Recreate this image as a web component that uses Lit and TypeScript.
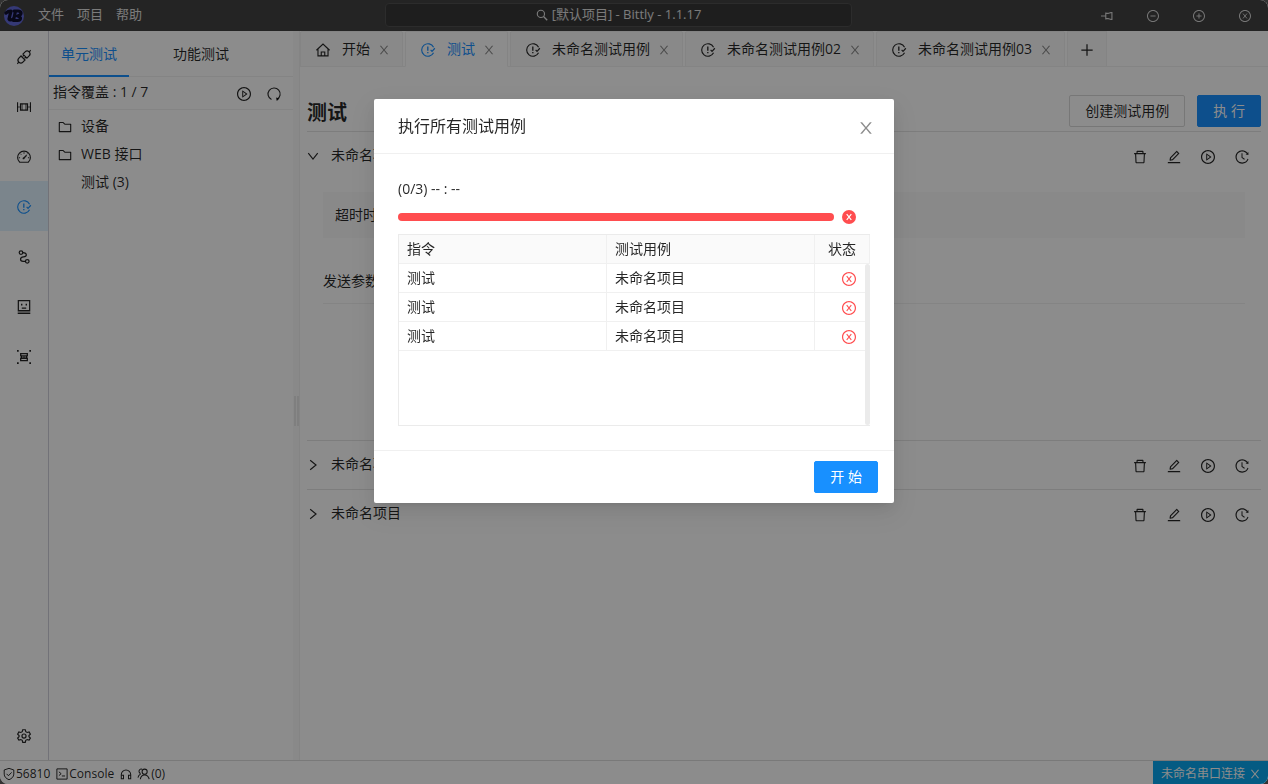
import { LitElement, html, svg, css, nothing } from "lit";
import { customElement, property } from "lit/decorators.js";

const fill = (d: string) => svg`<path fill="currentColor" d=${d}></path>`;
const line = (d: string, w = 72) =>
  svg`<path fill="none" stroke="currentColor" stroke-width=${w} d=${d}></path>`;

const CLOSE =
  "M563.8 512l262.5-312.9c4.4-5.2.7-13.1-6.1-13.1h-79.8c-4.7 0-9.2 2.1-12.3 5.7L511.6 449.8 295.1 191.7c-3-3.6-7.5-5.7-12.3-5.7H203c-6.8 0-10.5 7.9-6.1 13.1L459.4 512 196.9 824.9A7.95 7.95 0 00203 838h79.8c4.7 0 9.2-2.1 12.3-5.7l216.5-258.1 216.5 258.1c3 3.6 7.5 5.7 12.3 5.7h79.8c6.8 0 10.5-7.9 6.1-13.1L563.8 512z";
const RING =
  "M512 64C264.6 64 64 264.6 64 512s200.6 448 448 448 448-200.6 448-448S759.4 64 512 64zm0 820c-205.4 0-372-166.6-372-372s166.6-372 372-372 372 166.6 372 372-166.6 372-372 372z";
const SMALL_X = "M364 330L512 512L364 694M660 330L512 512L660 694";

const ICONS: Record<string, unknown> = {
  close: fill(CLOSE),
  play: [
    fill(RING),
    fill("M719.4 499.1l-296.1-215A15.9 15.9 0 00398 297v430c0 13.1 14.8 20.5 25.3 12.9l296.1-215a15.9 15.9 0 000-25.8zm-257.6 134V390.9L628.5 512 461.8 633.1z"),
  ],
  trash: fill("M360 184h-8c4.4 0 8-3.6 8-8v8h304v-8c0 4.4 3.6 8 8 8h-8v72h72v-80c0-35.3-28.7-64-64-64H352c-35.3 0-64 28.7-64 64v80h72v-72zm504 72H160c-17.7 0-32 14.3-32 32v32c0 4.4 3.6 8 8 8h60.4l24.7 523c1.6 34.1 29.8 61 63.9 61h454c34.2 0 62.3-26.8 63.9-61l24.7-523H888c4.4 0 8-3.6 8-8v-32c0-17.7-14.3-32-32-32zM731.3 840H292.7l-24.2-512h487l-24.2 512z"),
  edit: fill("M257.7 752c2 0 4-.2 6-.5L431.9 722c2-.4 3.9-1.3 5.3-2.8l423.9-423.9a9.96 9.96 0 000-14.1L694.9 114.9c-1.9-1.9-4.4-2.9-7.1-2.9s-5.2 1-7.1 2.9L256.8 538.8c-1.5 1.5-2.4 3.3-2.8 5.3l-29.5 168.2a33.5 33.5 0 009.4 29.8c6.6 6.4 14.9 9.9 23.8 9.9zm67.4-174.4L687.8 215l73.3 73.3-362.7 362.6-88.9 15.7 15.6-89zM880 836H144c-17.7 0-32 14.3-32 32v36c0 4.4 3.6 8 8 8h784c4.4 0 8-3.6 8-8v-36c0-17.7-14.3-32-32-32z"),
  folder: fill("M880 298.4H521L403.7 186.2a8.15 8.15 0 00-5.5-2.2H144c-17.7 0-32 14.3-32 32v592c0 17.7 14.3 32 32 32h736c17.7 0 32-14.3 32-32V330.4c0-17.7-14.3-32-32-32zM840 768H184V256h188.5l119.6 114.4H840V768z"),
  history: fill("M536.1 273H488c-4.4 0-8 3.6-8 8v275.3c0 2.6 1.2 5 3.3 6.5l165.3 120.7c3.6 2.6 8.6 1.9 11.2-1.7l28.6-39c2.7-3.7 1.9-8.7-1.7-11.2L544.1 528.5V281c0-4.4-3.6-8-8-8zm219.8 75.2l156.8 38.3c5 1.2 9.9-2.6 9.9-7.7l.8-161.5c0-6.7-7.7-10.5-12.9-6.3L752.9 334.1a8 8 0 003 14.1zm167.7 301.1l-56.7-19.5a8 8 0 00-10.1 4.8c-1.9 5.1-3.9 10.1-6 15.1-17.8 42.1-43.3 80-75.9 112.5a353 353 0 01-112.5 75.9 352.18 352.18 0 01-137.7 27.8c-47.8 0-94.1-9.3-137.7-27.8a353 353 0 01-112.5-75.9c-32.5-32.5-58-70.4-75.9-112.5A353.44 353.44 0 01171 512c0-47.8 9.3-94.2 27.8-137.8 17.8-42.1 43.3-80 75.9-112.5a353 353 0 01112.5-75.9C430.6 167.3 477 158 524.8 158s94.1 9.3 137.7 27.8A353 353 0 01775 261.7c10.2 10.3 19.8 21 28.6 32.3l59.8-46.8C784.7 146.6 662.2 81.9 524.6 82 285 82.1 92.6 276.7 95 516.4 97.4 751.9 288.9 942 524.8 942c185.5 0 343.5-117.6 403.7-282.3 1.5-4.2-.7-8.9-4.9-10.4z"),
  issue: [
    line("M868 330A402 402 0 1 0 868 694"),
    line("M680 500L770 600L950 400"),
    line("M500 290V560", 84),
    fill("M458 640h84v84h-84z"),
  ],
  home: [line("M90 530L512 130L934 530M190 450V890H834V450"), line("M400 880V640H624V880")],
  reload: [line("M350 868A390 390 0 1 1 700 860"), fill("M640 740L860 800L690 960z")],
  plus: line("M512 150V874M150 512H874", 80),
  down: line("M160 300L512 740L864 300", 84),
  right: line("M300 160L740 512L300 864", 84),
  search: [
    svg`<circle cx="430" cy="430" r="270" fill="none" stroke="currentColor" stroke-width="84"></circle>`,
    line("M630 630L900 900", 100),
  ],
  pin: line("M60 512H400M420 250V774M420 320H600C680 320 720 260 800 260H880V764H800C720 764 680 704 600 704H420", 84),
  minus: [fill(RING), line("M320 512H704")],
  max: [fill(RING), line("M320 512H704M512 320V704")],
  failed: [fill(RING), line(SMALL_X, 68)],
  failedSolid: [
    svg`<circle cx="512" cy="512" r="448" fill="currentColor"></circle>`,
    svg`<path fill="none" stroke="#fff" stroke-width="76" d=${SMALL_X}></path>`,
  ],
  plug: svg`<g transform="rotate(45 512 512)" fill="none" stroke="currentColor" stroke-width="76">
    <path d="M330 430V230A182 182 0 0 1 694 230V430zM512 50V-100"></path>
    <path d="M330 600V794A182 182 0 0 0 694 794V600zM512 974V1124M430 430V540M594 430V540"></path>
  </g>`,
  port: [
    line("M100 200V824M924 200V824"),
    line("M290 310H734V714H290z", 80),
    line("M100 512H290M734 512H924M390 310V714M634 310V714", 48),
  ],
  gauge: [
    line("M240 850A410 410 0 1 1 784 850z"),
    line("M490 590L680 400", 84),
    line("M512 210V300M275 300L335 360M745 290L700 340M180 560H260M764 560H844", 64),
    svg`<circle cx="480" cy="600" r="60" fill="currentColor"></circle>`,
  ],
  flow: [
    svg`<circle cx="320" cy="230" r="115" fill="none" stroke="currentColor" stroke-width="80"></circle>`,
    svg`<circle cx="720" cy="790" r="115" fill="none" stroke="currentColor" stroke-width="80"></circle>`,
    line("M430 230C560 230 660 290 660 390S600 500 480 510C330 530 290 590 290 660S360 790 450 790H600", 80),
  ],
  robot: [
    line("M150 110H874V740H150z", 80),
    fill("M320 310h90v100h-90zM614 310h90v100h-90zM370 540h284v76H370zM110 880h804v76H110z"),
    svg`<path fill="currentColor" opacity=".4" d="M110 780h804v100H110z"></path>`,
  ],
  group: [
    fill("M64 64h110v110H64zM850 64h110v110H850zM64 850h110v110H64zM850 850h110v110H850z"),
    line("M300 290H724V440H300zM300 590H724V740H300z", 84),
    line("M350 440V590M674 440V590M420 514H604", 64),
  ],
  gear: [
    line("M430 110H594L625 235L715 285L840 250L920 390L830 480V560L920 640L840 775L715 740L625 790L594 914H430L400 790L310 740L184 775L104 640L195 560V480L104 390L184 250L310 285L400 235z", 76),
    svg`<circle cx="512" cy="512" r="130" fill="none" stroke="currentColor" stroke-width="76"></circle>`,
  ],
  shield: [line("M512 90L870 210V520C870 720 720 850 512 940C304 850 154 720 154 520V210z"), line("M330 500L470 640L710 390")],
  terminal: [line("M130 130H894V894H130z"), line("M280 350L450 490L280 630M500 660H740")],
  headset: line("M160 560A352 352 0 0 1 864 560V860H700V600H864M160 560V860H324V600H160", 76),
  users: [
    svg`<circle cx="560" cy="340" r="190" fill="none" stroke="currentColor" stroke-width="80"></circle>`,
    line("M240 900C260 700 400 580 560 580S860 700 900 900", 80),
    line("M370 150A170 170 0 0 0 250 470M60 780C80 640 150 560 270 500", 76),
  ],
};

@customElement("ui-icon")
class UiIcon extends LitElement {
  static styles = css`
    :host { display: inline-flex; flex: none; width: 14px; height: 14px; margin-top: 2px; }
    svg { display: block; width: 100%; height: 100%; overflow: visible; }
  `;
  @property() name = "";
  render() {
    return html`<svg viewBox="64 64 896 896" aria-hidden="true">${ICONS[this.name]}</svg>`;
  }
}

const RAIL = [
  ["plug", "连接"],
  ["port", "接口"],
  ["gauge", "面板"],
  ["issue", "测试"],
  ["flow", "流程"],
  ["robot", "模拟"],
  ["group", "分组"],
];
const TABS = [
  { icon: "home", label: "开始" },
  { icon: "issue", label: "测试", active: true },
  { icon: "issue", label: "未命名测试用例" },
  { icon: "issue", label: "未命名测试用例02" },
  { icon: "issue", label: "未命名测试用例03" },
];
const RESULTS = ["未命名项目", "未命名项目", "未命名项目"];

@customElement("app-root")
class AppRoot extends LitElement {
  static styles = css`
    :host {
      display: block;
      height: 100vh;
      background: #333;
      color: rgba(0, 0, 0, 0.85);
      font: 14px/22px "Open Sans", "Noto Sans CJK SC", sans-serif;
    }
    * { box-sizing: border-box; }
    button, a { font: inherit; color: inherit; text-decoration: none; }
    button { display: inline-flex; align-items: center; justify-content: center; margin: 0; padding: 0; border: 0; background: none; white-space: nowrap; }
    .window { display: flex; flex-direction: column; height: 100%; overflow: hidden; border-radius: 8px; background: #fff; }

    .titlebar { display: grid; grid-template-columns: calc(50% - 249px) minmax(0, 467px) 1fr; align-items: center; flex: none; height: 31px; padding-bottom: 1px; background: #424242; color: #fff; font-size: 13px; line-height: 20px; }
    .menus { display: flex; align-items: center; gap: 14px; padding: 0 4px; }
    .logo { width: 20px; height: 20px; margin-top: 2px; }
    .menus nav { display: flex; gap: 13px; padding-bottom: 2px; }
    .menus nav button, .search { color: #e0e0e0; }
    .search { height: 24px; gap: 4px; padding-bottom: 2px; border: 1px solid #505050; border-radius: 4px; background: #373737; }
    .search ui-icon { width: 12px; height: 12px; }
    .winbtns { display: flex; justify-content: flex-end; }
    .winbtns button { width: 46px; height: 30px; color: #d8d8d8; }
    .winbtns ui-icon { width: 12px; height: 12px; }

    .body { display: flex; flex: 1; min-height: 0; }
    .rail { display: flex; flex-direction: column; flex: none; width: 49px; border-right: 1px solid #d0d0da; }
    .rail button { height: 50px; }
    .rail .on { background: #e0f3ff; color: #1890ff; }
    .rail .last { margin-top: auto; }

    .side { flex: none; width: 244px; }
    .sidetabs { display: flex; gap: 32px; height: 46px; border-bottom: 1px solid #f0f0f0; }
    .sidetabs button { height: 46px; padding: 2px 12px 0; border-bottom: 2px solid transparent; }
    .sidetabs .on { border-color: #1890ff; color: #1890ff; }
    .cover { display: flex; align-items: center; gap: 16px; height: 33px; padding: 0 12px 0 4px; border-bottom: 1px solid #f0f0f0; }
    .cover span { flex: 1; padding-bottom: 2px; }
    .tree { margin: 0; padding: 2px 9px; list-style: none; }
    .tree li { display: flex; align-items: center; gap: 9px; height: 28px; }
    .leaf { padding-left: 23px; }
    .splitter { display: flex; align-items: center; justify-content: center; gap: 1px; flex: none; width: 7px; padding-top: 30px; border-right: 1px solid #f0f0f0; background: #fafafa; }
    .splitter i { width: 2px; height: 30px; background: #e8e8e8; }

    .main { display: flex; flex-direction: column; flex: 1; min-width: 0; }
    .tabs { display: flex; gap: 2px; flex: none; height: 36px; box-shadow: inset 0 -1px #f0f0f0; }
    .tab { display: flex; align-items: center; height: 36px; padding: 0 12px 0 15px; border: 1px solid #f0f0f0; border-radius: 2px 2px 0 0; background: #fafafa; white-space: nowrap; }
    .tab .name { gap: 12px; margin-right: 8px; }
    .tab .x { color: rgba(0, 0, 0, 0.45); }
    .tab .x ui-icon { width: 12px; height: 12px; }
    .tab.on { border-bottom-color: #fff; background: #fff; color: #1890ff; }
    .add { width: 40px; border: 1px solid #f0f0f0; background: #fafafa; }
    .content { padding: 20px 7px; }
    .head { display: flex; align-items: center; gap: 12px; height: 45px; padding: 8px 0 4px; border-bottom: 1px solid #e4e4e4; }
    h1 { flex: 1; margin: 0; padding-top: 4px; font-size: 20px; line-height: 28px; font-weight: 700; }
    .btn { height: 32px; padding: 0 15px; border: 1px solid #d9d9d9; border-radius: 2px; background: #fff; }
    .primary { border-color: #1890ff; background: #1890ff; color: #fff; }
    .case { border-bottom: 1px solid #e4e4e4; }
    .case:last-child { border: 0; }
    .case header { display: flex; align-items: center; height: 48px; padding-right: 12px; }
    .case .fold { flex: 1; gap: 12px; justify-content: flex-start; padding-bottom: 2px; }
    .fold ui-icon { width: 12px; height: 12px; }
    .acts { display: flex; gap: 20px; }
    .detail { height: 260px; padding: 12px 16px; }
    .info { display: flex; align-items: center; height: 46px; padding: 0 12px; background: #fafafa; }
    .param { margin-top: 32px; padding-bottom: 11px; border-bottom: 1px solid #f0f0f0; }

    .status { display: flex; align-items: center; flex: none; height: 24px; padding: 2px 0 0 3px; border-top: 1px solid #ddd; font-size: 12px; line-height: 18px; }
    .status button { gap: 1px; margin-right: 6px; }
    .status ui-icon { width: 12px; height: 12px; margin-top: 0; }
    .status .conn { gap: 4px; align-self: stretch; margin: -2px 0 0 auto; padding: 2px 7px 0 8px; background: #09a6ee; color: #fff; }

    .mask { position: fixed; inset: 0; display: flex; align-items: flex-start; justify-content: center; padding-top: 99px; border-radius: 8px; background: rgba(0, 0, 0, 0.45); }
    .modal { width: 520px; border-radius: 2px; background: #fff; box-shadow: 0 3px 6px -4px rgba(0, 0, 0, 0.12), 0 6px 16px rgba(0, 0, 0, 0.08), 0 9px 28px 8px rgba(0, 0, 0, 0.05); }
    .mhead { display: flex; align-items: center; justify-content: space-between; height: 55px; padding: 0 20px 0 24px; border-bottom: 1px solid #f0f0f0; }
    h2 { margin: 0; font-size: 16px; line-height: 22px; font-weight: 400; }
    .mhead button { padding-top: 2px; color: rgba(0, 0, 0, 0.45); }
    .mhead ui-icon { width: 16px; height: 16px; }
    .mbody { padding: 24px; }
    .mbody p { margin: 0; }
    .progress { display: flex; align-items: center; gap: 8px; height: 34px; padding-right: 14px; color: #ff4d4f; }
    .progress ui-icon { margin-top: 0; }
    .bar { flex: 1; height: 8px; border-radius: 4px; background: #f5f5f5; }
    .bar div { height: 100%; border-radius: 4px; background: #ff4d4f; }
    .list { position: relative; height: 192px; border: 1px solid #ebebeb; border-right: 0; }
    .list::after { content: ""; position: absolute; top: 29px; right: 0; bottom: 0; width: 5px; border-radius: 3px; background: #ebebeb; }
    table { width: 100%; border-collapse: separate; border-spacing: 0; table-layout: fixed; }
    th, td { height: 29px; padding: 0 8px; border: 0 solid #f0f0f0; border-width: 0 1px 1px 0; text-align: left; font-weight: 400; }
    th { background: #fafafa; }
    .state { width: 55px; padding-right: 13px; text-align: right; }
    td.state { padding-right: 14px; color: #ff4d4f; border-right: 0; }
    td ui-icon { margin-top: 0; vertical-align: middle; }
    .mfoot { display: flex; justify-content: flex-end; padding: 10px 16px; border-top: 1px solid #f0f0f0; }
  `;

  private renderCase(open: boolean) {
    return html`<section class="case">
      <header>
        <button class="fold" aria-expanded=${open}><ui-icon name=${open ? "down" : "right"}></ui-icon>未命名项目</button>
        <div class="acts">
          <button aria-label="删除"><ui-icon name="trash"></ui-icon></button>
          <button aria-label="编辑"><ui-icon name="edit"></ui-icon></button>
          <button aria-label="执行"><ui-icon name="play"></ui-icon></button>
          <button aria-label="历史"><ui-icon name="history"></ui-icon></button>
        </div>
      </header>
      ${open
        ? html`<div class="detail"><div class="info">超时时间</div><div class="param">发送参数</div></div>`
        : nothing}
    </section>`;
  }

  render() {
    return html`
      <div class="window">
        <header class="titlebar">
          <div class="menus">
            <svg class="logo" viewBox="0 0 20 20" aria-hidden="true">
              <circle cx="10" cy="10" r="10" fill="#6268d8"></circle>
              <g fill="none" stroke="#10102c" stroke-linejoin="round" stroke-linecap="round">
                <path stroke-width="3.2" d="M2 7Q4 5 7 5L5 13Q6 15 9 13"></path>
                <path stroke-width="3.2" d="M11.500 5L9.500 14.500H13.500Q16.500 14.500 16.500 12Q16 10.500 13.500 10Q17.500 9 17 6.500Q16.500 5 14 5H10"></path>
              </g>
            </svg>
            <nav><button>文件</button><button>项目</button><button>帮助</button></nav>
          </div>
          <button class="search"><ui-icon name="search"></ui-icon>[默认项目] - Bittly - 1.1.17</button>
          <div class="winbtns">
            <button aria-label="置顶"><ui-icon name="pin"></ui-icon></button>
            <button aria-label="最小化"><ui-icon name="minus"></ui-icon></button>
            <button aria-label="最大化"><ui-icon name="max"></ui-icon></button>
            <button aria-label="关闭"><ui-icon name="failed"></ui-icon></button>
          </div>
        </header>
        <div class="body">
          <nav class="rail">
            ${RAIL.map(([icon, label]) => html`<button class=${icon === "issue" ? "on" : ""} aria-label=${label}><ui-icon name=${icon}></ui-icon></button>`)}
            <button class="last" aria-label="设置"><ui-icon name="gear"></ui-icon></button>
          </nav>
          <aside class="side">
            <div class="sidetabs"><button class="on">单元测试</button><button>功能测试</button></div>
            <div class="cover">
              <span>指令覆盖 : 1 / 7</span>
              <button aria-label="执行全部"><ui-icon name="play"></ui-icon></button>
              <button aria-label="刷新"><ui-icon name="reload"></ui-icon></button>
            </div>
            <ul class="tree">
              <li><ui-icon name="folder"></ui-icon>设备</li>
              <li><ui-icon name="folder"></ui-icon>WEB 接口</li>
              <li><span class="leaf">测试 (3)</span></li>
            </ul>
          </aside>
          <div class="splitter"><i></i><i></i></div>
          <main class="main">
            <div class="tabs">
              ${TABS.map(
                (t) => html`<div class="tab ${t.active ? "on" : ""}">
                  <button class="name"><ui-icon name=${t.icon}></ui-icon>${t.label}</button>
                  <button class="x" aria-label="关闭"><ui-icon name="close"></ui-icon></button>
                </div>`
              )}
              <button class="add" aria-label="新建"><ui-icon name="plus"></ui-icon></button>
            </div>
            <div class="content">
              <div class="head">
                <h1>测试</h1>
                <button class="btn">创建测试用例</button>
                <button class="btn primary">执 行</button>
              </div>
              <div>${[true, false, false].map((o) => this.renderCase(o))}</div>
            </div>
          </main>
        </div>
        <footer class="status">
          <button><ui-icon name="shield"></ui-icon>56810</button>
          <button><ui-icon name="terminal"></ui-icon>Console</button>
          <button aria-label="支持"><ui-icon name="headset"></ui-icon></button>
          <button><ui-icon name="users"></ui-icon>(0)</button>
          <button class="conn">未命名串口连接<ui-icon name="close"></ui-icon></button>
        </footer>
      </div>

      <div class="mask">
        <div class="modal" role="dialog" aria-modal="true" aria-labelledby="dialog-title">
          <div class="mhead">
            <h2 id="dialog-title">执行所有测试用例</h2>
            <button aria-label="关闭"><ui-icon name="close"></ui-icon></button>
          </div>
          <div class="mbody">
            <p>(0/3) -- : --</p>
            <div class="progress"><div class="bar"><div></div></div><ui-icon name="failedSolid"></ui-icon></div>
            <div class="list">
              <table>
                <thead><tr><th>指令</th><th>测试用例</th><th class="state">状态</th></tr></thead>
                <tbody>
                  ${RESULTS.map((r) => html`<tr><td>测试</td><td>${r}</td><td class="state"><ui-icon name="failed"></ui-icon></td></tr>`)}
                </tbody>
              </table>
            </div>
          </div>
          <div class="mfoot"><button class="btn primary">开 始</button></div>
        </div>
      </div>
    `;
  }
}
